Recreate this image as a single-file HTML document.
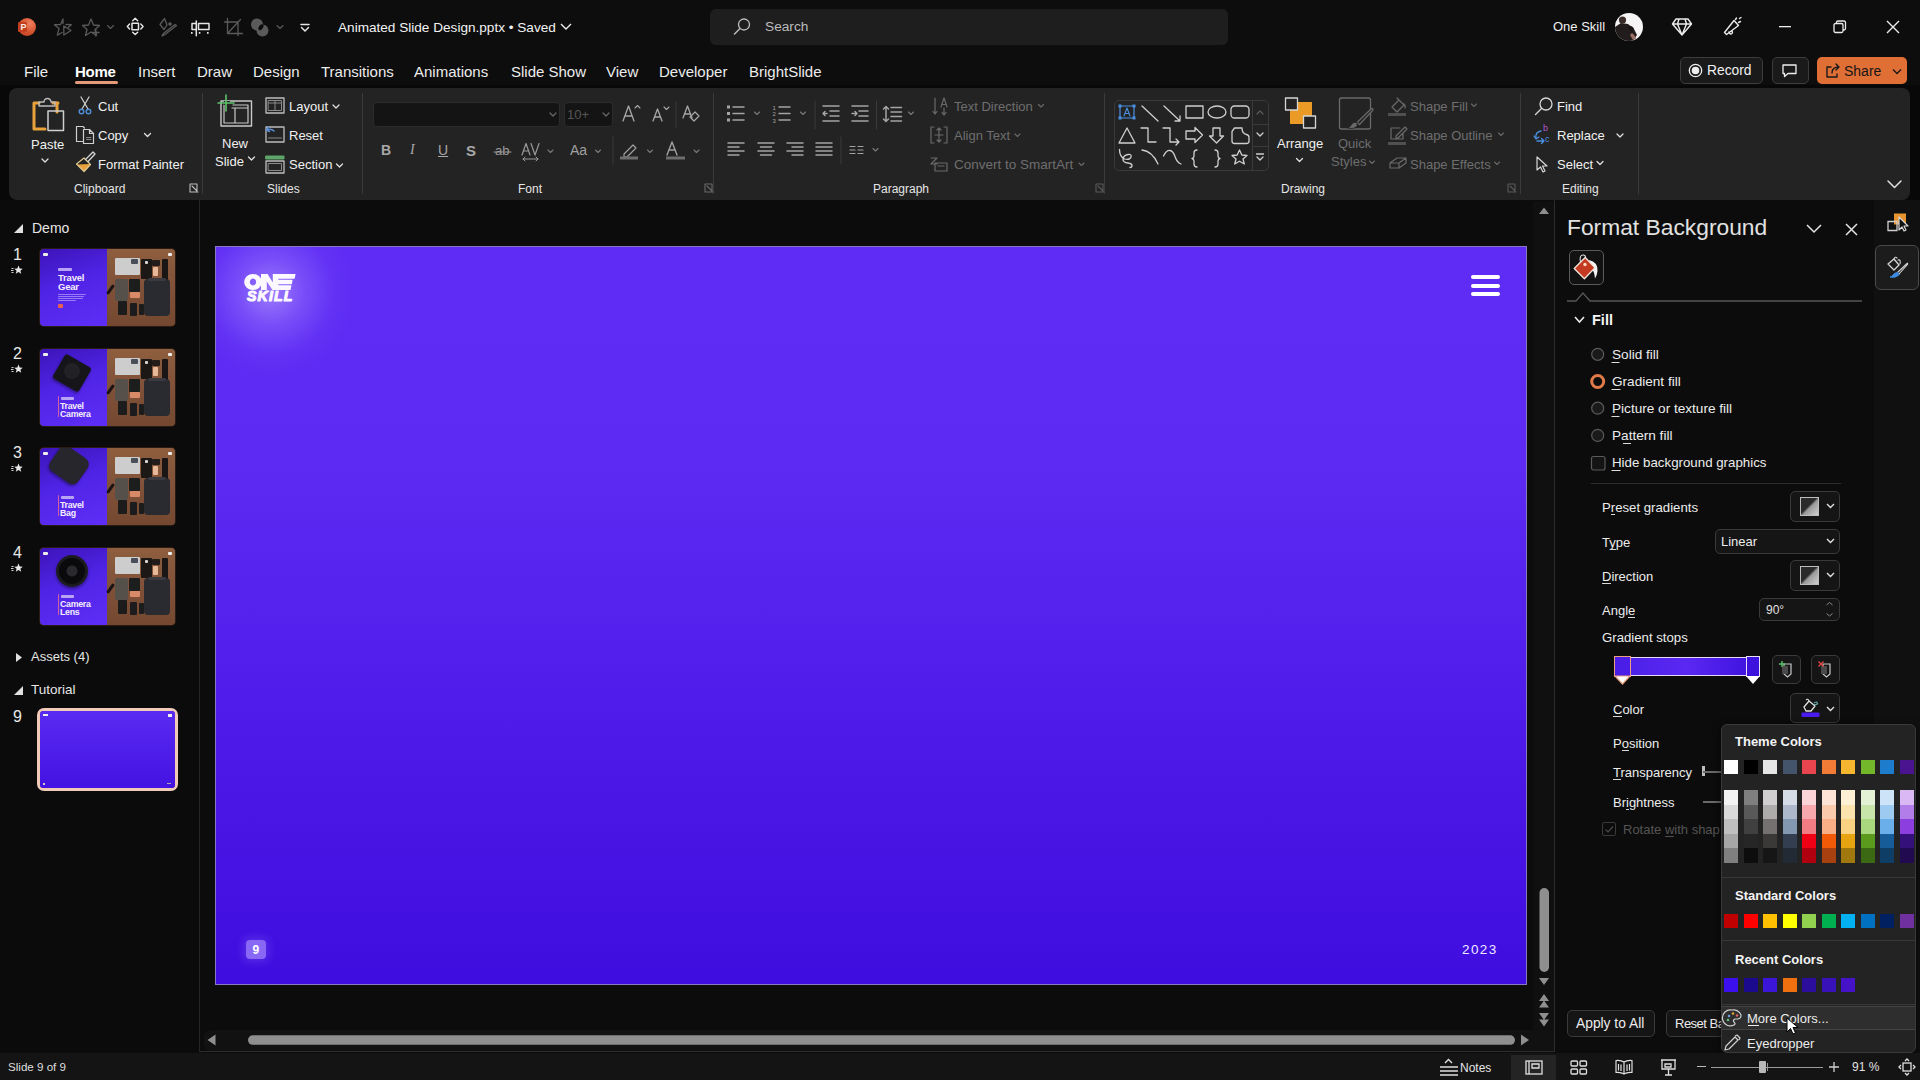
<!DOCTYPE html>
<html><head><meta charset="utf-8">
<style>
*{box-sizing:border-box;margin:0;padding:0}
html,body{width:1920px;height:1080px;overflow:hidden;background:#0d0d0d;font-family:"Liberation Sans",sans-serif;color:#e8e8e8}
.a{position:absolute}
.t{position:absolute;white-space:nowrap;line-height:1}
svg{position:absolute;overflow:visible}
.rb{font-size:13px;color:#f0f0f0}
.dis{color:#6e6e6e}
.gl{font-size:12px;color:#e6e6e6}
.pn{font-size:13.5px;color:#ececec}
</style></head><body>
<!-- ============ TITLE BAR ============ -->
<!-- PPT logo -->
<div class="a" style="left:18px;top:18px;width:18px;height:18px;border-radius:50%;background:radial-gradient(circle at 65% 30%,#f08060 0%,#d45430 50%,#b83c1e 100%)"></div>
<div class="a" style="left:18px;top:22px;width:9px;height:10px;border-radius:1px;background:#c2401e"></div>
<div class="t" style="left:20.5px;top:23px;font-size:9px;font-weight:bold;color:#fbe8e0">P</div>
<!-- quick access icons -->
<svg style="left:0;top:0" width="330" height="55" fill="none" stroke-linejoin="round" stroke-linecap="round">
 <!-- star play (grey) -->
 <path d="M63 23.5 L63 19 L60.5 24.5 L54.5 24.7 L59 28.6 L57.3 35.2 L62 32.5 M66 24.5 L71.3 24.7 L68.5 27.2" stroke="#5a5a5a" stroke-width="1.3"/>
 <path d="M63.8 26 L71 30.5 L63.8 35 Z" stroke="#5a5a5a" stroke-width="1.3"/>
 <!-- star plus (grey) -->
 <path d="M91 19 L93.5 25 L99.5 25.5 L95 29.5 L96.5 35.5 L91 32 L85.5 35.5 L87 29.5 L82.5 25.5 L88.5 25 Z" stroke="#5a5a5a" stroke-width="1.3"/>
 <path d="M95.8 29.5 v6.5 M92.5 32.5 h6.5" stroke="#5a5a5a" stroke-width="1.3"/>
 <path d="M107.5 25.5 l3 3 l3 -3" stroke="#5a5a5a" stroke-width="1.1"/>
 <!-- move arrows (white) -->
 <rect x="132" y="23.2" width="6.5" height="6.5" stroke="#e6e6e6" stroke-width="1.5"/>
 <path d="M132.7 20.7 L135.2 18.3 L137.7 20.7 M132.7 32.2 L135.2 34.6 L137.7 32.2 M129.6 24 L127.3 26.5 L129.6 29 M140.8 24 L143.1 26.5 L140.8 29" stroke="#e6e6e6" stroke-width="1.4"/>
 <!-- brush grey -->
 <path d="M164.5 18.5 l-4.5 6 l4 5 l3 -4.5 z" stroke="#5a5a5a" stroke-width="1.3"/>
 <circle cx="170" cy="24" r="1.8" fill="#5a5a5a"/>
 <path d="M176.5 25.5 L165 34.5 q-2 1 -3 1.5 q1 -2 2 -3 L175 24.5 z" stroke="#5a5a5a" stroke-width="1.3"/>
 <!-- align (white) -->
 <path d="M196.3 21 v14.8 M196 23.5 h-4 v6 h4 M198.5 23.5 h10.5 v6 h-10.5 z" stroke="#e6e6e6" stroke-width="1.5"/>
 <g fill="#e6e6e6"><rect x="191" y="32" width="1.6" height="1.8"/><rect x="198.8" y="32" width="1.6" height="1.8"/><rect x="207" y="32" width="1.6" height="1.8"/></g>
 <!-- crop grey -->
 <path d="M227.5 18.5 v15 h15 M224.5 22 h13.5 v13.5 M228 33 L240.5 19.5" stroke="#5a5a5a" stroke-width="1.3"/>
 <!-- merge shapes grey -->
 <circle cx="257" cy="24.5" r="6" fill="#5a5a5a"/><circle cx="262.5" cy="30.5" r="6" fill="#5a5a5a"/>
 <ellipse cx="261" cy="27.2" rx="2" ry="3.3" transform="rotate(35 261 27.2)" fill="#0a0a0a"/>
 <path d="M277 25.5 l3 3 l3 -3" stroke="#5a5a5a" stroke-width="1.1"/>
 <!-- customize -->
 <path d="M301 24.5 h8" stroke="#e6e6e6" stroke-width="1.5"/>
 <path d="M301.5 27.5 l3.5 3.5 l3.5 -3.5" stroke="#e6e6e6" stroke-width="1.5"/>
</svg>
<div class="t" style="left:338px;top:21px;font-size:13.6px;color:#f2f2f2">Animated Slide Design.pptx • Saved</div>
<svg style="left:560px;top:22px" width="12" height="10" fill="none"><path d="M1 2 l5 5 l5 -5" stroke="#eee" stroke-width="1.4"/></svg>
<!-- search -->
<div class="a" style="left:710px;top:9px;width:518px;height:36px;border-radius:6px;background:#1e1e1e"></div>
<svg style="left:733px;top:18px" width="18" height="18" fill="none"><circle cx="11" cy="6.5" r="5.5" stroke="#bdbdbd" stroke-width="1.3"/><path d="M7 10.5 L1 16.5" stroke="#bdbdbd" stroke-width="1.4"/></svg>
<div class="t" style="left:765px;top:20px;font-size:13.7px;color:#bcbcbc">Search</div>
<!-- right side -->
<div class="t" style="left:1553px;top:20px;font-size:13px;color:#f0f0f0">One Skill</div>
<svg style="left:1615px;top:13px" width="28" height="28">
 <defs><clipPath id="avc"><circle cx="14" cy="14" r="14"/></clipPath></defs>
 <g clip-path="url(#avc)">
  <rect width="28" height="28" fill="#f6f4f4"/>
  <path d="M0 14 L6 10 L13 11 L19 16 L22 22 L18 28 L0 28 Z" fill="#231c1c"/>
  <circle cx="7.5" cy="7" r="3.6" fill="#3a2c28"/>
  <path d="M13 13 q4 -1 6 3 l-2 3 q-3 -2 -4 -6z" fill="#1a1414"/>
  <path d="M17 20 q3 2 4 6 l-3 1 q-2 -3 -3 -5z" fill="#9a7066"/>
 </g>
</svg>
<svg style="left:1672px;top:18px" width="20" height="18" fill="none" stroke="#ececec" stroke-width="1.4" stroke-linejoin="round"><path d="M4 1 h12 l3.5 5 L10 17 L0.5 6 Z M0.5 6 h19 M7 1 L5.5 6 L10 17 L14.5 6 L13 1"/></svg>
<svg style="left:1723px;top:17px" width="22" height="20" fill="none" stroke="#ececec" stroke-width="1.4" stroke-linejoin="round" stroke-linecap="round"><path d="M1.5 15.5 L11 3.5 L15.5 8.5 L3.5 17.5 Z M6 15 q1 3 3 1.5 q1 -1 0 -2.5 M12.5 2.5 l1 -1.5 M15.5 5.5 l2 -1 M16.5 1.5 l1.5 -1"/></svg>
<svg style="left:1779px;top:26px" width="14" height="2"><rect width="12" height="1.3" fill="#ececec"/></svg>
<svg style="left:1833px;top:20px" width="14" height="14" fill="none" stroke="#ececec" stroke-width="1.3"><rect x="1" y="3.5" width="9" height="9" rx="1.5"/><path d="M3.5 3.5 V2.5 a1.5 1.5 0 0 1 1.5 -1.5 h6 a1.5 1.5 0 0 1 1.5 1.5 v6 a1.5 1.5 0 0 1 -1.5 1.5 h-1"/></svg>
<svg style="left:1886px;top:20px" width="14" height="14" fill="none" stroke="#ececec" stroke-width="1.4"><path d="M1 1 L13 13 M13 1 L1 13"/></svg>

<!-- ============ TABS ============ -->
<div class="t" style="left:24px;top:64px;font-size:15px;color:#ececec">File</div>
<div class="t" style="left:75px;top:64px;font-size:15px;color:#fff;font-weight:bold;letter-spacing:-0.3px">Home</div>
<div class="a" style="left:75px;top:81px;width:43px;height:3px;border-radius:2px;background:#e39a78"></div>
<div class="t" style="left:138px;top:64px;font-size:15px;color:#ececec">Insert</div>
<div class="t" style="left:197px;top:64px;font-size:15px;color:#ececec">Draw</div>
<div class="t" style="left:253px;top:64px;font-size:15px;color:#ececec">Design</div>
<div class="t" style="left:321px;top:64px;font-size:15px;color:#ececec">Transitions</div>
<div class="t" style="left:414px;top:64px;font-size:15px;color:#ececec">Animations</div>
<div class="t" style="left:511px;top:64px;font-size:15px;color:#ececec">Slide Show</div>
<div class="t" style="left:606px;top:64px;font-size:15px;color:#ececec">View</div>
<div class="t" style="left:659px;top:64px;font-size:15px;color:#ececec">Developer</div>
<div class="t" style="left:749px;top:64px;font-size:15px;color:#ececec">BrightSlide</div>
<!-- record / comment / share -->
<div class="a" style="left:1680px;top:57px;width:83px;height:27px;border-radius:5px;background:#1a1a1a;border:1px solid #3c3c3c"></div>
<svg style="left:1688px;top:63px" width="15" height="15" fill="none"><circle cx="7.5" cy="7.5" r="6.2" stroke="#eee" stroke-width="1.3"/><circle cx="7.5" cy="7.5" r="3.8" fill="#eee"/></svg>
<div class="t" style="left:1707px;top:64px;font-size:13.8px;color:#f0f0f0">Record</div>
<div class="a" style="left:1772px;top:57px;width:37px;height:27px;border-radius:5px;background:#1a1a1a;border:1px solid #3c3c3c"></div>
<svg style="left:1782px;top:64px" width="16" height="14" fill="none" stroke="#eee" stroke-width="1.3" stroke-linejoin="round"><path d="M1 1 h13 v8.5 h-8 l-3.5 3 v-3 h-1.5 Z"/></svg>
<div class="a" style="left:1817px;top:57px;width:90px;height:27px;border-radius:5px;background:#e06f36"></div>
<svg style="left:1825px;top:63px" width="16" height="15" fill="none" stroke="#1a1a1a" stroke-width="1.4" stroke-linejoin="round" stroke-linecap="round"><path d="M6 4 H2 v10 h10 v-3 M7 10 c0 -4 3 -6 7 -6 M11 1 l3 3 l-3 3"/></svg>
<div class="t" style="left:1844px;top:64px;font-size:14px;color:#151515">Share</div>
<svg style="left:1892px;top:68px" width="10" height="8" fill="none"><path d="M1 1.5 l4 4 l4 -4" stroke="#1a1a1a" stroke-width="1.4"/></svg>
<!-- ============ RIBBON ============ -->
<div class="a" style="left:0;top:85px;width:1920px;height:118px;background:#080808"></div>
<div class="a" style="left:9px;top:88px;width:1901px;height:112px;border-radius:8px;background:#232323"></div>
<!-- separators -->
<div class="a" style="left:202px;top:93px;width:1px;height:101px;background:#3a3a3a"></div>
<div class="a" style="left:362px;top:93px;width:1px;height:101px;background:#3a3a3a"></div>
<div class="a" style="left:713px;top:93px;width:1px;height:101px;background:#3a3a3a"></div>
<div class="a" style="left:1104px;top:93px;width:1px;height:101px;background:#3a3a3a"></div>
<div class="a" style="left:1520px;top:93px;width:1px;height:101px;background:#3a3a3a"></div>
<div class="a" style="left:1638px;top:93px;width:1px;height:101px;background:#3a3a3a"></div>

<!-- Clipboard -->
<svg style="left:0;top:0" width="200" height="200" fill="none" stroke-linejoin="round" stroke-linecap="round">
 <!-- paste clipboard -->
 <path d="M34 103 h5 M53 103 h5 M34 103 v26 h11" stroke="#e9a23b" stroke-width="3"/>
 <path d="M57 103 v9" stroke="#e9a23b" stroke-width="3"/>
 <path d="M39 106 h16 v-4 h-4 a3.5 3.5 0 0 0 -7 0 h-5 z" stroke="#bdbdbd" stroke-width="1.4"/>
 <rect x="48" y="111" width="15.5" height="19.5" stroke="#cfcfcf" stroke-width="1.5"/>
 <path d="M42 159 l3 3 l3 -3" stroke="#e0e0e0" stroke-width="1.3"/>
 <!-- scissors -->
 <path d="M81 97 L88 109 M89 97 L82 109" stroke="#d6d6d6" stroke-width="1.2"/>
 <circle cx="81.5" cy="111.5" r="2.3" stroke="#4f8fd6" stroke-width="1.4"/><circle cx="88.5" cy="111.5" r="2.3" stroke="#4f8fd6" stroke-width="1.4"/>
 <!-- copy -->
 <path d="M82.5 141.5 h-6 v-15 h6.5 l1.5 1.5" stroke="#cfcfcf" stroke-width="1.2"/>
 <path d="M83.5 129.5 h6 l4 4 v10 h-10 z M89.5 129.5 v4 h4" stroke="#cfcfcf" stroke-width="1.2"/>
 <path d="M86.5 137.5 h4.5 M86.5 139.5 h4.5" stroke="#8a8a8a" stroke-width="1"/>
 <path d="M144.5 133.5 l3 3 l3 -3" stroke="#e0e0e0" stroke-width="1.3"/>
 <!-- format painter -->
 <path d="M77 164.5 L91 164 L84.5 171.5 Z" fill="#e9a23b"/>
 <path d="M76.5 164 L84 158 L90.5 164.5 L84 171.5 Z" stroke="#e2c890" stroke-width="1.2"/>
 <path d="M85.5 159.5 L93 152 L95 154 L88 161.5" stroke="#d6d6d6" stroke-width="1.3"/>
 <path d="M190 184 h7 v7 M190 184 v8 h8 M192 186 l5 5" stroke="#bdbdbd" stroke-width="1.1"/>
</svg>
<div class="t rb" style="left:31px;top:138px">Paste</div>
<div class="t rb" style="left:98px;top:100px">Cut</div>
<div class="t rb" style="left:98px;top:129px">Copy</div>
<div class="t rb" style="left:98px;top:158px">Format Painter</div>
<div class="t gl" style="left:74px;top:183px">Clipboard</div>

<!-- Slides -->
<svg style="left:0;top:0" width="370" height="200" fill="none" stroke-linejoin="round" stroke-linecap="round">
 <rect x="221" y="101" width="30.5" height="25" stroke="#c9c9c9" stroke-width="1.4"/>
 <path d="M224 105 v18 h24 v-18 h-15 M232 108 h16 M235 108 v15" stroke="#c9c9c9" stroke-width="1.2"/>
 <rect x="224" y="101" width="6" height="4" fill="#232323" stroke="none"/>
 <path d="M226 95 v16 M218 103 h16" stroke="#5ec46a" stroke-width="1.6"/>
 <path d="M248.5 157 l3 3 l3 -3" stroke="#e0e0e0" stroke-width="1.3"/>
 <!-- layout -->
 <rect x="266" y="98" width="18" height="15" stroke="#bdbdbd" stroke-width="1.3"/>
 <rect x="268.5" y="100.5" width="13" height="10" stroke="#8a8a8a" stroke-width="1"/>
 <path d="M275 100.5 v10 M268.5 103 h13" stroke="#8a8a8a" stroke-width="1"/>
 <path d="M333 105 l3 3 l3 -3" stroke="#e0e0e0" stroke-width="1.3"/>
 <!-- reset -->
 <rect x="266" y="127" width="18" height="15" stroke="#bdbdbd" stroke-width="1.3"/>
 <path d="M268.5 138 h13" stroke="#8a8a8a" stroke-width="1"/>
 <path d="M274 131 q-3 -3 -7 -1 M266.5 130 l2 -3 M266.5 130 l3 1.5" stroke="#5a8fd6" stroke-width="1.5"/>
 <!-- section -->
 <rect x="266" y="156" width="18" height="3" fill="#5fa56a" stroke="#5fa56a" stroke-width="1"/>
 <rect x="266" y="161" width="18" height="12" stroke="#bdbdbd" stroke-width="1.3"/>
 <rect x="268.5" y="163.5" width="13" height="7" stroke="#8a8a8a" stroke-width="1"/>
 <path d="M336.5 164 l3 3 l3 -3" stroke="#e0e0e0" stroke-width="1.3"/>
</svg>
<div class="t rb" style="left:222px;top:137px">New</div>
<div class="t rb" style="left:215px;top:155px">Slide</div>
<div class="t rb" style="left:289px;top:100px">Layout</div>
<div class="t rb" style="left:289px;top:129px">Reset</div>
<div class="t rb" style="left:289px;top:158px">Section</div>
<div class="t gl" style="left:267px;top:183px">Slides</div>

<!-- Font -->
<div class="a" style="left:373px;top:102px;width:187px;height:25px;border-radius:4px;background:#141414;border:1px solid #2c2c2c"></div>
<div class="a" style="left:564px;top:102px;width:49px;height:25px;border-radius:4px;background:#141414;border:1px solid #2c2c2c"></div>
<div class="t" style="left:567px;top:108px;font-size:13px;color:#555">10+</div>
<svg style="left:0;top:0" width="720" height="200" fill="none" stroke-linejoin="round" stroke-linecap="round">
 <path d="M550 113 l3 3 l3 -3 M603 113 l3 3 l3 -3" stroke="#6a6a6a" stroke-width="1.2"/>
 <!-- grow/shrink -->
 <path d="M623 121 L628.5 106 L634 121 M625 116 h7" stroke="#a8a8a8" stroke-width="1.3"/>
 <path d="M635 108 l2.5 -2.5 l2.5 2.5" stroke="#a8a8a8" stroke-width="1.1"/>
 <path d="M653 121 L657.5 109 L662 121 M654.5 117 h6" stroke="#a8a8a8" stroke-width="1.3"/>
 <path d="M664 107 l2.5 2.5 l2.5 -2.5" stroke="#a8a8a8" stroke-width="1.1"/>
 <path d="M676 102 v26" stroke="#3a3a3a" stroke-width="1"/>
 <path d="M683 118 L687.5 106 L692 118 M684.5 114 h5" stroke="#a8a8a8" stroke-width="1.3"/>
 <path d="M690 117 l5 -5 l4 4 l-5 5 z" stroke="#a8a8a8" stroke-width="1.2"/>
 <path d="M613 137 v27" stroke="#3a3a3a" stroke-width="1"/>
 <!-- strike ab -->
 <path d="M494 152 h17" stroke="#9a9a9a" stroke-width="1.1"/>
 <!-- AV -->
 <path d="M522 155 L526 143.5 L530 155 M523.5 151 h5 M531 143.5 L535 155 L539 143.5" stroke="#9a9a9a" stroke-width="1.2"/>
 <path d="M523 159 h15 M525 157 l-2 2 l2 2 M536 157 l2 2 l-2 2" stroke="#9a9a9a" stroke-width="1"/>
 <path d="M548 150 l2.5 2.5 l2.5 -2.5 M595.5 150 l2.5 2.5 l2.5 -2.5 M647.5 150 l2.5 2.5 l2.5 -2.5 M694 150 l2.5 2.5 l2.5 -2.5" stroke="#7a7a7a" stroke-width="1.1"/>
 <!-- highlighter -->
 <path d="M624 154 l9 -9 l3 3 l-9 9 h-3 z" stroke="#a0a0a0" stroke-width="1.2"/>
 <rect x="620" y="156.5" width="18" height="3" fill="#6e6e6e"/>
 <!-- font color -->
 <path d="M667 155 L672 142 L677 155 M669 150 h6" stroke="#a0a0a0" stroke-width="1.4"/>
 <rect x="666" y="156.5" width="19" height="3" fill="#6e6e6e"/>
 <path d="M705 184 h7 v7 M705 184 v8 h8 M707 186 l5 5" stroke="#6a6a6a" stroke-width="1.1"/>
</svg>
<div class="t" style="left:381px;top:143px;font-size:14px;font-weight:bold;color:#a8a8a8">B</div>
<div class="t" style="left:410px;top:143px;font-size:14px;font-style:italic;font-family:'Liberation Serif',serif;color:#a8a8a8">I</div>
<div class="t" style="left:438px;top:143px;font-size:14px;color:#a8a8a8;text-decoration:underline">U</div>
<div class="t" style="left:466px;top:143px;font-size:15px;font-weight:bold;color:#a8a8a8">S</div>
<div class="t" style="left:495px;top:144px;font-size:13px;color:#9a9a9a">ab</div>
<div class="t" style="left:570px;top:143px;font-size:14px;color:#a0a0a0">Aa</div>
<div class="t gl" style="left:518px;top:183px">Font</div>
<!-- Paragraph -->
<svg style="left:0;top:0" width="1110" height="200" fill="none" stroke-linejoin="round" stroke-linecap="round">
 <g stroke="#a4a4a4" stroke-width="1.5">
  <!-- bullets -->
  <path d="M733 107 h11 M733 113.5 h11 M733 120 h11"/>
  <!-- numbering -->
  <path d="M779 107 h11 M779 113.5 h11 M779 120 h11"/>
  <!-- decrease indent -->
  <path d="M823 106 h16 M830 111 h9 M830 116 h9 M823 121 h16 M827 113.5 h-4 M825 111.5 l-2 2 l2 2"/>
  <!-- increase indent -->
  <path d="M852 106 h16 M859 111 h9 M859 116 h9 M852 121 h16 M852 113.5 h5 M855 111.5 l2 2 l-2 2"/>
  <!-- line spacing -->
  <path d="M891 107.5 h10.5 M891 112 h10.5 M891 116.5 h10.5 M891 121 h10.5 M886 107 v14 M883.5 109 l2.5 -2.5 l2.5 2.5 M883.5 119 l2.5 2.5 l2.5 -2.5"/>
  <!-- align rows -->
  <path d="M728 143 h16 M728 147 h11 M728 151 h16 M728 155 h11"/>
  <path d="M758 143 h16 M760.5 147 h11 M758 151 h16 M760.5 155 h11"/>
  <path d="M787 143 h16 M792 147 h11 M787 151 h16 M792 155 h11"/>
  <path d="M816 143 h16 M816 147 h16 M816 151 h16 M816 155 h16"/>
  <!-- columns -->
  <path d="M850 146.5 h5 M858 146.5 h5 M850 150 h5 M858 150 h5 M850 153.5 h5 M858 153.5 h5" stroke-width="1.2"/>
 </g>
 <g fill="#a4a4a4"><rect x="727" y="105.5" width="3" height="3"/><rect x="727" y="112" width="3" height="3"/><rect x="727" y="118.5" width="3" height="3"/></g>
 <g fill="#a4a4a4" font-size="6" font-family="Liberation Sans"><text x="772.5" y="109.5">1</text><text x="772.5" y="116">2</text><text x="772.5" y="122.5">3</text></g>
 <path d="M754.5 112 l2.5 2.5 l2.5 -2.5 M800.5 112 l2.5 2.5 l2.5 -2.5 M908.5 112 l2.5 2.5 l2.5 -2.5 M873 148.5 l2.5 2.5 l2.5 -2.5" stroke="#7a7a7a" stroke-width="1.1"/>
 <path d="M815 101 v28 M876.5 101 v28 M841 137 v27" stroke="#3a3a3a" stroke-width="1"/>
 <!-- text direction (disabled) -->
 <g stroke="#6a6a6a" stroke-width="1.2">
  <path d="M935 98 v16 M933 111.5 l2 2.5 l2 -2.5 M941 107 L944 98 L947 107 M942 104.5 h4 M944 108 v7 M942 112.5 l2 2.5 l2 -2.5"/>
  <path d="M934 127 h-3 v16 h3 M944 127 h3 v16 h-3 M939 128 v14 M937 130 l2 -2 l2 2 M937 140 l2 2 l2 -2 M935 135 h8"/>
  <path d="M931 158 h6 l-6 6 h6 M935 163 h12 v8 h-12 z M938 166 h6"/>
 </g>
 <path d="M1038.5 104.5 l2.5 2.5 l2.5 -2.5 M1015 134 l2.5 2.5 l2.5 -2.5 M1079 163 l2.5 2.5 l2.5 -2.5" stroke="#6a6a6a" stroke-width="1.1"/>
 <path d="M1096 184 h7 v7 M1096 184 v8 h8 M1098 186 l5 5" stroke="#5a5a5a" stroke-width="1.1"/>
</svg>
<div class="t" style="left:773px;top:104px;font-size:5px;color:#a4a4a4"></div>
<div class="t rb dis" style="left:954px;top:100px">Text Direction</div>
<div class="t rb dis" style="left:954px;top:129px">Align Text</div>
<div class="t rb dis" style="left:954px;top:158px;font-size:13.5px">Convert to SmartArt</div>
<div class="t gl" style="left:873px;top:183px">Paragraph</div>

<!-- Drawing -->
<div class="a" style="left:1114px;top:100px;width:155px;height:71px;border-radius:5px;border:1px solid #3a3a3a"></div>
<div class="a" style="left:1252px;top:100px;width:1px;height:71px;background:#3a3a3a"></div>
<div class="a" style="left:1252px;top:124px;width:17px;height:1px;background:#3a3a3a"></div>
<div class="a" style="left:1252px;top:146px;width:17px;height:1px;background:#3a3a3a"></div>
<svg style="left:0;top:0" width="1530" height="200" fill="none" stroke-linejoin="round" stroke-linecap="round">
 <!-- row 1 -->
 <rect x="1120" y="106" width="14" height="12" stroke="#4a90e2" stroke-width="1.2"/>
 <g fill="#4a90e2"><rect x="1118.5" y="104.5" width="3" height="3"/><rect x="1132.5" y="104.5" width="3" height="3"/><rect x="1118.5" y="116.5" width="3" height="3"/><rect x="1132.5" y="116.5" width="3" height="3"/></g>
 <path d="M1124 116 L1127 108 L1130 116 M1125 113.5 h4" stroke="#4a90e2" stroke-width="1.1"/>
 <g stroke="#cfcfcf" stroke-width="1.3">
  <path d="M1142 106 L1158 121"/>
  <path d="M1164 106 L1180 121 M1180 116 v5 h-5"/>
  <rect x="1186" y="106" width="17" height="12"/>
  <ellipse cx="1217" cy="112" rx="9" ry="6"/>
  <rect x="1231" y="106" width="18" height="12" rx="3.5"/>
  <!-- row 2 -->
  <path d="M1119 143 L1127 128 L1135 143 Z"/>
  <path d="M1141 128 h7 v14 h8"/>
  <path d="M1163 128 h7 v14 h9 M1176 139 l3 3 l-3 3"/>
  <path d="M1186 131 h9 v-3.5 l7.5 7.5 l-7.5 7.5 v-3.5 h-9 z"/>
  <path d="M1213 128 h7 v8 h3.5 l-7 7 l-7 -7 h3.5 z"/>
  <path d="M1234.5 128 h7.5 q0 5.5 4.5 6.5 q2.5 .5 2.5 3 v3.5 q0 2.5 -2.5 2.5 h-12 q-2.5 0 -2.5 -2.5 v-9.5 z"/>
  <!-- row 3 -->
  <path d="M1119.5 149.5 q0 7 5 9.5 q5 1.5 6.5 -2 q1 -3 -3 -2.5 q-5 1 -5 5 q0 3 5 3.5 q4 .5 4 2.5 q0 2 -2 2"/>
  <path d="M1142 150 q10 1 16 14"/>
  <path d="M1163.5 156 q3 -6 6.5 -5.5 q3 .5 5 6 q2 6 6 7.5"/>
  <path d="M1197 150 q-3 0 -3 3 v3 q0 2 -2 2.5 q2 .5 2 2.5 v3 q0 3 3 3"/>
  <path d="M1215 150 q3 0 3 3 v3 q0 2 2 2.5 q-2 .5 -2 2.5 v3 q0 3 -3 3"/>
  <path d="M1239.5 150 l2.3 5 l5.2 .5 l-4 3.5 l1.3 5 l-4.8 -2.8 l-4.8 2.8 l1.3 -5 l-4 -3.5 l5.2 -.5 z"/>
 </g>
 <path d="M1257 114 l3 -3 l3 3" stroke="#5a5a5a" stroke-width="1.2"/>
 <path d="M1257 133 l3 3 l3 -3" stroke="#cfcfcf" stroke-width="1.3"/>
 <path d="M1256.5 154 h7 M1257 157 l3 3 l3 -3" stroke="#cfcfcf" stroke-width="1.3"/>
 <!-- arrange -->
 <rect x="1290" y="102" width="22" height="22" fill="#ec9a26"/>
 <rect x="1285.5" y="98" width="12" height="12" fill="#232323" stroke="#d6d6d6" stroke-width="1.3"/>
 <rect x="1303.5" y="116" width="12" height="12" fill="#232323" stroke="#d6d6d6" stroke-width="1.3"/>
 <path d="M1296.5 158.5 l3 3 l3 -3" stroke="#e0e0e0" stroke-width="1.3"/>
 <!-- quick styles -->
 <rect x="1339.5" y="98" width="31" height="31" rx="2" stroke="#6a6a6a" stroke-width="1.3"/>
 <path d="M1371 109 q2 -1.5 2 1 L1359.5 124.5 l-2.5 -2 Z" stroke="#6a6a6a" stroke-width="1.2" fill="#232323"/>
 <path d="M1357 122.5 q-3.5 -1 -5.5 2 q-1 2.5 -4 3.5 q6 1.5 9 -1.5 q1.5 -1.5 .5 -2 z" fill="#6a6a6a" stroke="#232323" stroke-width=".8"/>
 <path d="M1369.5 161 l2.5 2.5 l2.5 -2.5" stroke="#6a6a6a" stroke-width="1.1"/>
 <!-- shape fill/outline/effects -->
 <g stroke="#6a6a6a" stroke-width="1.2">
  <path d="M1392 107 l7 -7 l5 5 l-7 7 z M1399 100 l-2 -2 M1404 104 q2 2 1 4"/>
  <path d="M1391 128 h9 M1391 128 v11 h12 v-5 M1396 136 l9 -9 l2 2 l-9 9 h-2 z"/>
  <path d="M1390 163 l7 -5 h9 l-7 5 z M1390 163 v5 h9 v-5 M1399 168 l7 -5 v-5"/>
 </g>
 <rect x="1388" y="113" width="18" height="3" fill="#505050"/>
 <rect x="1388" y="142" width="18" height="3" fill="#505050"/>
 <path d="M1471.5 104 l2.5 2.5 l2.5 -2.5 M1498.5 133 l2.5 2.5 l2.5 -2.5 M1494.5 162 l2.5 2.5 l2.5 -2.5" stroke="#6a6a6a" stroke-width="1.1"/>
 <path d="M1508 184 h7 v7 M1508 184 v8 h8 M1510 186 l5 5" stroke="#5a5a5a" stroke-width="1.1"/>
</svg>
<div class="t rb" style="left:1277px;top:137px">Arrange</div>
<div class="t rb dis" style="left:1338px;top:137px">Quick</div>
<div class="t rb dis" style="left:1331px;top:155px">Styles</div>
<div class="t rb dis" style="left:1410px;top:100px">Shape Fill</div>
<div class="t rb dis" style="left:1410px;top:129px">Shape Outline</div>
<div class="t rb dis" style="left:1410px;top:158px">Shape Effects</div>
<div class="t gl" style="left:1281px;top:183px">Drawing</div>

<!-- Editing -->
<svg style="left:0;top:0" width="1920" height="200" fill="none" stroke-linejoin="round" stroke-linecap="round">
 <circle cx="1546" cy="104" r="6" stroke="#d6d6d6" stroke-width="1.3"/>
 <path d="M1541.5 108.5 L1535.5 114.5" stroke="#d6d6d6" stroke-width="1.4"/>
 <path d="M1541 131 q-6 1 -5 7 M1534 136 l2 3 l3 -2 M1537 141 h7 M1541.5 138.5 l2.5 2.5 l-2.5 2.5" stroke="#4a90e2" stroke-width="1.3"/>
 <path d="M1617 134 l3 3 l3 -3 M1597 161.5 l3 3 l3 -3" stroke="#e0e0e0" stroke-width="1.3"/>
 <path d="M1537 157 v13 l3.5 -3 l2.5 5 l2 -1 l-2.5 -5 h4.5 z" stroke="#d6d6d6" stroke-width="1.2"/>
 <path d="M1888 181 l6.5 6.5 l6.5 -6.5" stroke="#e0e0e0" stroke-width="1.5"/>
</svg>
<div class="t" style="left:1543px;top:124px;font-size:9px;color:#b05ac8">b</div>
<div class="t" style="left:1545px;top:135px;font-size:9px;color:#4a90e2">c</div>
<div class="t rb" style="left:1557px;top:100px">Find</div>
<div class="t rb" style="left:1557px;top:129px">Replace</div>
<div class="t rb" style="left:1557px;top:158px">Select</div>
<div class="t gl" style="left:1562px;top:183px">Editing</div>
<!-- ============ LEFT PANEL ============ -->
<div class="a" style="left:0;top:200px;width:200px;height:852px;background:#0b0b0b"></div>
<div class="a" style="left:199px;top:200px;width:1px;height:852px;background:#262626"></div>
<style>
.th{position:absolute;left:40px;width:135px;height:77px;border-radius:4px;overflow:hidden;background:#6e4128;box-shadow:0 0 0 1px #2a1c14}
.th .pl{position:absolute;left:0;top:0;width:67px;height:77px;background:linear-gradient(160deg,#3c14b8 0%,#5024e6 45%,#5e2ef6 100%)}
.th .wd{position:absolute;left:67px;top:0;width:68px;height:77px;background:linear-gradient(180deg,#8e5e3e 0%,#82523a 45%,#744830 100%)}
.th .ob{position:absolute;left:0;top:0;width:135px;height:77px;filter:blur(0.6px)}
.th .o{position:absolute;border-radius:1px}
.th .tt{position:absolute;font-weight:bold;color:#f4eefc;line-height:0.92;white-space:nowrap}
.sn{position:absolute;font-size:16px;color:#e8e8e8;line-height:1}
.st{position:absolute;left:11px;width:12px;height:10px}
</style>
<svg style="left:14px;top:224px" width="10" height="10"><path d="M9 0 V9 H0 Z" fill="#e0e0e0"/></svg>
<div class="t" style="left:32px;top:221px;font-size:14px;color:#e6e6e6">Demo</div>

<div class="sn" style="left:13px;top:247px">1</div>
<svg class="st" style="top:265px" viewBox="0 0 12 10"><path d="M7.5 0.5 l1.2 3 l3 .2 l-2.3 2 l.8 3 l-2.7 -1.7 l-2.7 1.7 l.8 -3 l-2.3 -2 l3 -.2 z" fill="#e8e8e8"/><path d="M0.5 3.5 h2 M0 5.5 h2.5 M0.5 7.5 h2" stroke="#e8e8e8" stroke-width=".9"/></svg>
<div class="th" style="top:249px">
 <div class="pl"></div><div class="wd"></div>
 <div class="ob">
 <div class="o" style="left:75px;top:9px;width:25px;height:17px;background:#cdcdce"></div>
 <div class="o" style="left:91px;top:10px;width:7px;height:5px;background:#4a4e58"></div>
 <div class="o" style="left:101px;top:10px;width:11px;height:20px;background:#1c1816"></div>
 <div class="o" style="left:105px;top:12px;width:3px;height:3px;background:#d8d8d8"></div>
 <div class="o" style="left:113px;top:18px;width:5px;height:9px;background:#e8b898"></div>
 <div class="o" style="left:112px;top:11px;width:8px;height:6px;background:#221c1a"></div>
 <div class="o" style="left:122px;top:10px;width:6px;height:22px;background:#1a1616"></div>
 <div class="o" style="left:69px;top:35px;width:3px;height:11px;background:#1a1414;transform:rotate(35deg)"></div>
 <div class="o" style="left:75px;top:30px;width:13px;height:22px;border-radius:2px;background:#55504a"></div>
 <div class="o" style="left:89px;top:30px;width:11px;height:13px;background:#1c1e1e"></div>
 <div class="o" style="left:90px;top:43px;width:10px;height:6px;background:#d88a68"></div>
 <div class="o" style="left:104px;top:30px;width:26px;height:37px;border-radius:4px;background:#2a2b30"></div>
 <div class="o" style="left:108px;top:29px;width:18px;height:3px;border-radius:2px;background:#3a3a40"></div>
 <div class="o" style="left:78px;top:52px;width:9px;height:14px;background:#1c1c1c"></div>
 <div class="o" style="left:90px;top:54px;width:7px;height:13px;background:#1c1c1e"></div>
 <div class="o" style="left:99px;top:55px;width:5px;height:11px;background:#1c1c1c"></div>
 </div>
 <div class="o" style="left:3px;top:4px;width:5px;height:2.5px;background:#eee"></div>
 <div class="o" style="left:128px;top:4px;width:4px;height:3px;background:#eee"></div>
 <div class="o" style="left:18px;top:19px;width:14px;height:3px;background:#b8a4f4"></div>
 <div class="tt" style="left:18px;top:25px;font-size:9.5px;letter-spacing:-.2px">Travel<br>Gear</div>
 <div class="o" style="left:18px;top:45px;width:28px;height:1px;background:rgba(220,210,255,.5)"></div>
 <div class="o" style="left:18px;top:47px;width:26px;height:1px;background:rgba(220,210,255,.5)"></div>
 <div class="o" style="left:18px;top:49px;width:25px;height:1px;background:rgba(220,210,255,.5)"></div>
 <div class="o" style="left:18px;top:51px;width:18px;height:1px;background:rgba(220,210,255,.5)"></div>
 <div class="o" style="left:18px;top:55px;width:5px;height:4px;background:#e86050"></div>
</div>
<div class="sn" style="left:13px;top:346px">2</div>
<svg class="st" style="top:364px" viewBox="0 0 12 10"><path d="M7.5 0.5 l1.2 3 l3 .2 l-2.3 2 l.8 3 l-2.7 -1.7 l-2.7 1.7 l.8 -3 l-2.3 -2 l3 -.2 z" fill="#e8e8e8"/><path d="M0.5 3.5 h2 M0 5.5 h2.5 M0.5 7.5 h2" stroke="#e8e8e8" stroke-width=".9"/></svg>
<div class="th" style="top:349px">
 <div class="pl"></div><div class="wd"></div>
 <div class="ob">
 <div class="o" style="left:75px;top:9px;width:25px;height:17px;background:#cdcdce"></div>
 <div class="o" style="left:91px;top:10px;width:7px;height:5px;background:#4a4e58"></div>
 <div class="o" style="left:101px;top:10px;width:11px;height:20px;background:#1c1816"></div>
 <div class="o" style="left:105px;top:12px;width:3px;height:3px;background:#d8d8d8"></div>
 <div class="o" style="left:113px;top:18px;width:5px;height:9px;background:#e8b898"></div>
 <div class="o" style="left:112px;top:11px;width:8px;height:6px;background:#221c1a"></div>
 <div class="o" style="left:122px;top:10px;width:6px;height:22px;background:#1a1616"></div>
 <div class="o" style="left:69px;top:35px;width:3px;height:11px;background:#1a1414;transform:rotate(35deg)"></div>
 <div class="o" style="left:75px;top:30px;width:13px;height:22px;border-radius:2px;background:#55504a"></div>
 <div class="o" style="left:89px;top:30px;width:11px;height:13px;background:#1c1e1e"></div>
 <div class="o" style="left:90px;top:43px;width:10px;height:6px;background:#d88a68"></div>
 <div class="o" style="left:104px;top:30px;width:26px;height:37px;border-radius:4px;background:#2a2b30"></div>
 <div class="o" style="left:108px;top:29px;width:18px;height:3px;border-radius:2px;background:#3a3a40"></div>
 <div class="o" style="left:78px;top:52px;width:9px;height:14px;background:#1c1c1c"></div>
 <div class="o" style="left:90px;top:54px;width:7px;height:13px;background:#1c1c1e"></div>
 <div class="o" style="left:99px;top:55px;width:5px;height:11px;background:#1c1c1c"></div>
 </div>
 <div class="o" style="left:3px;top:4px;width:5px;height:2.5px;background:#eee"></div>
 <div class="o" style="left:128px;top:4px;width:4px;height:3px;background:#eee"></div>
 <div class="o" style="left:17px;top:10px;width:30px;height:28px;border-radius:3px;background:#16161a;transform:rotate(30deg);box-shadow:0 2px 3px rgba(0,0,0,.4)"></div>
 <div class="o" style="left:24px;top:14px;width:16px;height:16px;border-radius:50%;background:#222226;transform:rotate(30deg)"></div>
 <div class="o" style="left:21px;top:48px;width:13px;height:3px;background:#b8a4f4"></div>
 <div class="o" style="left:18px;top:47px;width:1.2px;height:21px;background:#d060a0"></div>
 <div class="tt" style="left:20px;top:53px;font-size:8.8px;letter-spacing:-.3px">Travel<br>Camera</div>
</div>
<div class="sn" style="left:13px;top:445px">3</div>
<svg class="st" style="top:463px" viewBox="0 0 12 10"><path d="M7.5 0.5 l1.2 3 l3 .2 l-2.3 2 l.8 3 l-2.7 -1.7 l-2.7 1.7 l.8 -3 l-2.3 -2 l3 -.2 z" fill="#e8e8e8"/><path d="M0.5 3.5 h2 M0 5.5 h2.5 M0.5 7.5 h2" stroke="#e8e8e8" stroke-width=".9"/></svg>
<div class="th" style="top:448px">
 <div class="pl"></div><div class="wd"></div>
 <div class="ob">
 <div class="o" style="left:75px;top:9px;width:25px;height:17px;background:#cdcdce"></div>
 <div class="o" style="left:91px;top:10px;width:7px;height:5px;background:#4a4e58"></div>
 <div class="o" style="left:101px;top:10px;width:11px;height:20px;background:#1c1816"></div>
 <div class="o" style="left:105px;top:12px;width:3px;height:3px;background:#d8d8d8"></div>
 <div class="o" style="left:113px;top:18px;width:5px;height:9px;background:#e8b898"></div>
 <div class="o" style="left:112px;top:11px;width:8px;height:6px;background:#221c1a"></div>
 <div class="o" style="left:122px;top:10px;width:6px;height:22px;background:#1a1616"></div>
 <div class="o" style="left:69px;top:35px;width:3px;height:11px;background:#1a1414;transform:rotate(35deg)"></div>
 <div class="o" style="left:75px;top:30px;width:13px;height:22px;border-radius:2px;background:#55504a"></div>
 <div class="o" style="left:89px;top:30px;width:11px;height:13px;background:#1c1e1e"></div>
 <div class="o" style="left:90px;top:43px;width:10px;height:6px;background:#d88a68"></div>
 <div class="o" style="left:104px;top:30px;width:26px;height:37px;border-radius:4px;background:#2a2b30"></div>
 <div class="o" style="left:108px;top:29px;width:18px;height:3px;border-radius:2px;background:#3a3a40"></div>
 <div class="o" style="left:78px;top:52px;width:9px;height:14px;background:#1c1c1c"></div>
 <div class="o" style="left:90px;top:54px;width:7px;height:13px;background:#1c1c1e"></div>
 <div class="o" style="left:99px;top:55px;width:5px;height:11px;background:#1c1c1c"></div>
 </div>
 <div class="o" style="left:3px;top:4px;width:5px;height:2.5px;background:#eee"></div>
 <div class="o" style="left:128px;top:4px;width:4px;height:3px;background:#eee"></div>
 <div class="o" style="left:12px;top:2px;width:34px;height:30px;border-radius:7px;background:#26262c;transform:rotate(35deg);box-shadow:0 2px 3px rgba(0,0,0,.4)"></div>
 <div class="o" style="left:21px;top:48px;width:13px;height:3px;background:#b8a4f4"></div>
 <div class="o" style="left:18px;top:47px;width:1.2px;height:21px;background:#d060a0"></div>
 <div class="tt" style="left:20px;top:53px;font-size:8.8px;letter-spacing:-.3px">Travel<br>Bag</div>
</div>
<div class="sn" style="left:13px;top:545px">4</div>
<svg class="st" style="top:563px" viewBox="0 0 12 10"><path d="M7.5 0.5 l1.2 3 l3 .2 l-2.3 2 l.8 3 l-2.7 -1.7 l-2.7 1.7 l.8 -3 l-2.3 -2 l3 -.2 z" fill="#e8e8e8"/><path d="M0.5 3.5 h2 M0 5.5 h2.5 M0.5 7.5 h2" stroke="#e8e8e8" stroke-width=".9"/></svg>
<div class="th" style="top:548px">
 <div class="pl"></div><div class="wd"></div>
 <div class="ob">
 <div class="o" style="left:75px;top:9px;width:25px;height:17px;background:#cdcdce"></div>
 <div class="o" style="left:91px;top:10px;width:7px;height:5px;background:#4a4e58"></div>
 <div class="o" style="left:101px;top:10px;width:11px;height:20px;background:#1c1816"></div>
 <div class="o" style="left:105px;top:12px;width:3px;height:3px;background:#d8d8d8"></div>
 <div class="o" style="left:113px;top:18px;width:5px;height:9px;background:#e8b898"></div>
 <div class="o" style="left:112px;top:11px;width:8px;height:6px;background:#221c1a"></div>
 <div class="o" style="left:122px;top:10px;width:6px;height:22px;background:#1a1616"></div>
 <div class="o" style="left:69px;top:35px;width:3px;height:11px;background:#1a1414;transform:rotate(35deg)"></div>
 <div class="o" style="left:75px;top:30px;width:13px;height:22px;border-radius:2px;background:#55504a"></div>
 <div class="o" style="left:89px;top:30px;width:11px;height:13px;background:#1c1e1e"></div>
 <div class="o" style="left:90px;top:43px;width:10px;height:6px;background:#d88a68"></div>
 <div class="o" style="left:104px;top:30px;width:26px;height:37px;border-radius:4px;background:#2a2b30"></div>
 <div class="o" style="left:108px;top:29px;width:18px;height:3px;border-radius:2px;background:#3a3a40"></div>
 <div class="o" style="left:78px;top:52px;width:9px;height:14px;background:#1c1c1c"></div>
 <div class="o" style="left:90px;top:54px;width:7px;height:13px;background:#1c1c1e"></div>
 <div class="o" style="left:99px;top:55px;width:5px;height:11px;background:#1c1c1c"></div>
 </div>
 <div class="o" style="left:3px;top:4px;width:5px;height:2.5px;background:#eee"></div>
 <div class="o" style="left:128px;top:4px;width:4px;height:3px;background:#eee"></div>
 <div class="o" style="left:16px;top:7px;width:32px;height:32px;border-radius:50%;background:radial-gradient(circle,#2a2a2e 0 22%,#0a0a0c 26% 55%,#1c1c20 60%);box-shadow:0 2px 3px rgba(0,0,0,.4)"></div>
 <div class="o" style="left:21px;top:47px;width:13px;height:3px;background:#b8a4f4"></div>
 <div class="o" style="left:18px;top:46px;width:1.2px;height:21px;background:#d060a0"></div>
 <div class="tt" style="left:20px;top:52px;font-size:8.8px;letter-spacing:-.3px">Camera<br>Lens</div>
</div>
<!-- Assets -->
<svg style="left:16px;top:653px" width="8" height="10"><path d="M0 0 L6 4.5 L0 9 Z" fill="#e0e0e0"/></svg>
<div class="t" style="left:31px;top:650px;font-size:13px;color:#e6e6e6">Assets (4)</div>
<svg style="left:14px;top:686px" width="10" height="10"><path d="M9 0 V9 H0 Z" fill="#e0e0e0"/></svg>
<div class="t" style="left:31px;top:683px;font-size:13.5px;color:#e6e6e6">Tutorial</div>
<div class="sn" style="left:13px;top:709px">9</div>
<div class="a" style="left:37px;top:708px;width:141px;height:83px;border-radius:7px;border:3px solid #f2cbb8"></div>
<div class="a" style="left:40px;top:711px;width:135px;height:77px;border-radius:3px;background:linear-gradient(180deg,#5a2bf2,#4412e2)"></div>
<div class="a" style="left:43px;top:714px;width:5px;height:2px;background:#eee"></div>
<div class="a" style="left:168px;top:714px;width:4px;height:3px;background:#eee"></div>
<div class="a" style="left:43px;top:783px;width:2px;height:2px;background:#ccc"></div>
<div class="a" style="left:167px;top:783px;width:4px;height:1px;background:#aaa"></div>
<!-- ============ MAIN AREA ============ -->
<div class="a" style="left:200px;top:200px;width:1355px;height:852px;background:#0c0c0c"></div>
<div class="a" style="left:1554px;top:200px;width:1px;height:852px;background:#2c2c2c"></div>
<div class="a" style="left:200px;top:1051px;width:1355px;height:1px;background:#2c2c2c"></div>
<!-- slide -->
<div class="a" style="left:215px;top:246px;width:1312px;height:739px;background:linear-gradient(180deg,#5e2cf4 0%,#5c2af2 30%,#4c18e8 70%,#3f0ddf 100%);border:1px solid #8a78c0;overflow:hidden">
 <div class="a" style="left:-30px;top:-40px;width:170px;height:170px;border-radius:50%;background:radial-gradient(closest-side,rgba(180,155,255,.7),rgba(160,125,255,.4) 40%,rgba(130,90,255,.12) 75%,rgba(120,80,255,0) 100%)"></div>
</div>
<!-- logo -->
<svg style="left:0;top:0" width="320" height="320">
 <path fill-rule="evenodd" fill="#fbf8ff" d="M253 274 a8.8 8 0 1 0 0.01 0 Z M253 278.6 a3.1 3.5 0 1 1 -0.01 0 Z"/>
 <path fill="#fbf8ff" d="M261 290 L261 274 L267.6 274 L272.8 282.5 L272.8 274 L295.6 274 L294.6 278.7 L278.3 278.7 L278.3 279.7 L292.6 279.7 L291.8 284.2 L278.3 284.2 L278.3 285.2 L291.4 285.2 L290.6 290 L272.5 290 L266.8 281.5 L266.8 290 Z"/>
 <text x="247" y="301.3" font-family="Liberation Sans" font-weight="bold" font-style="italic" font-size="14.2" letter-spacing="1.1" fill="#fbf8ff" stroke="#fbf8ff" stroke-width="1.1" stroke-linejoin="round">SKILL</text>
</svg>
<!-- hamburger -->
<div class="a" style="left:1471px;top:275px;width:29px;height:4px;border-radius:2px;background:#fff"></div>
<div class="a" style="left:1471px;top:283.5px;width:29px;height:4px;border-radius:2px;background:#fff"></div>
<div class="a" style="left:1471px;top:292px;width:29px;height:4px;border-radius:2px;background:#fff"></div>
<!-- page number badge -->
<div class="a" style="left:246px;top:940px;width:20px;height:19px;border-radius:4px;background:#8a68f6;box-shadow:0 0 8px 3px rgba(140,110,250,.3)"></div>
<div class="t" style="left:252.5px;top:944px;font-size:12px;font-weight:bold;color:#fff">9</div>
<div class="t" style="left:1462px;top:943px;font-size:13.5px;color:#f0eaff;letter-spacing:1.4px">2023</div>

<div class="a" style="left:1533px;top:202px;width:21px;height:828px;background:#101010"></div>
<div class="a" style="left:204px;top:1030px;width:1350px;height:21px;border-radius:6px 0 0 6px;background:#111111"></div>
<!-- vertical scrollbar -->
<svg style="left:1536px;top:204px" width="16" height="830">
 <path d="M3 10 L8 3.5 L13 10 Z" fill="#8f8f8f"/>
 <rect x="3.5" y="684" width="9.5" height="84" rx="4.75" fill="#8f8f8f"/>
 <path d="M3 774 L13 774 L8 781 Z" fill="#8f8f8f"/>
 <path d="M3 797 L8 790 L13 797 Z M3 803.5 L8 796.5 L13 803.5 Z" fill="#8f8f8f"/>
 <path d="M3 809 L13 809 L8 816 Z M3 815.5 L13 815.5 L8 822.5 Z" fill="#8f8f8f"/>
</svg>
<!-- horizontal scrollbar -->
<svg style="left:200px;top:1030px" width="1340" height="20">
 <path d="M7.5 10 L15.5 4.5 L15.5 15.5 Z" fill="#8f8f8f"/>
 <rect x="48" y="5.3" width="1267" height="9.5" rx="4.75" fill="#8f8f8f"/>
 <path d="M1329 10 L1321 4.5 L1321 15.5 Z" fill="#8f8f8f"/>
</svg>
<!-- ============ FORMAT PANE ============ -->
<div class="a" style="left:1555px;top:200px;width:319px;height:855px;background:#0c0c0c"></div>
<div class="a" style="left:1874px;top:200px;width:46px;height:855px;background:#101010"></div>
<div class="t" style="left:1567px;top:216px;font-size:22.8px;color:#e2e2e2">Format Background</div>
<svg style="left:1806px;top:224px" width="18" height="10" fill="none"><path d="M1 1 L8 8 L15 1" stroke="#e4e4e4" stroke-width="1.5"/></svg>
<svg style="left:1845px;top:223px" width="13" height="13" fill="none"><path d="M1 1 L12 12 M12 1 L1 12" stroke="#e4e4e4" stroke-width="1.5"/></svg>
<!-- right strip icons -->
<svg style="left:1886px;top:212px" width="24" height="22" fill="none">
 <rect x="8" y="1.5" width="12" height="11" fill="#e8932e"/>
 <path d="M2 9.5 h9 v9 h-9 z" stroke="#cfcfcf" stroke-width="1.3"/>
 <path d="M13 5 v13 l3 -3 l2 4 l2 -1 l-2 -4 h4 z" fill="#101010" stroke="#d6d6d6" stroke-width="1.2" stroke-linejoin="round"/>
</svg>
<div class="a" style="left:1875px;top:245px;width:44px;height:45px;border-radius:6px;background:#1c1c1c;border:1px solid #4a4a4a"></div>
<svg style="left:1886px;top:255px" width="24" height="24" fill="none" stroke-linejoin="round" stroke-linecap="round">
 <path d="M2 9 l6 -5 l5 6 l-5 5 z" stroke="#d6d6d6" stroke-width="1.3"/>
 <path d="M8 4 q1 -3 3 -1 M12 5 q3 -1 2 4" stroke="#d6d6d6" stroke-width="1.1"/>
 <path d="M21 8.5 q1 -1 .5 1 L13 19 l-1.5 -1.5 Z" stroke="#d6d6d6" stroke-width="1.1"/>
 <path d="M11.5 17.5 q-3 0 -4.5 2.5 q-1 1.5 -3 2 q5.5 1.5 9 -2 z" fill="#3d8ae0" stroke="#3d8ae0" stroke-width="1"/>
</svg>
<!-- fill tab icon -->
<div class="a" style="left:1569px;top:250px;width:35px;height:35px;border-radius:5px;background:#121212;border:1.5px solid #5a5a5a"></div>
<svg style="left:1565px;top:245px" width="45" height="45" fill="none">
 <path d="M24 15 Q33 17 32.5 26 Q32 31 30 33.5 Q29.5 27 26.5 23 Z" fill="#f4f4f4"/>
 <path d="M9.2 23.5 L20.2 12.5 L30 22.7 L19.4 33.75 Z" fill="#c43a20" stroke="#f2e4de" stroke-width="1.3" stroke-linejoin="round"/>
 <path d="M15.5 17.5 Q14 9.5 18.5 10 Q21 10.5 20.5 13" stroke="#e0e0e0" stroke-width="1.1"/>
 <circle cx="20" cy="19.5" r="1.7" fill="#f8d8c0"/>
</svg>
<!-- tab underline with notch -->
<svg style="left:1566px;top:290px" width="300" height="14" fill="none">
 <path d="M1 11 H10 L17 3 L24 11 H296" stroke="#555" stroke-width="1.3"/>
</svg>
<!-- Fill header -->
<svg style="left:1574px;top:316px" width="12" height="8" fill="none"><path d="M1 1 L5.5 6 L10 1" stroke="#eaeaea" stroke-width="1.6"/></svg>
<div class="t" style="left:1592px;top:313px;font-size:14.5px;font-weight:bold;color:#f4f4f4">Fill</div>
<!-- radios -->
<svg style="left:1588px;top:345px" width="20" height="130" fill="none">
 <circle cx="9.7" cy="9.3" r="6" fill="#1a1a1a" stroke="#5a5a5a" stroke-width="1.2"/>
 <circle cx="9.7" cy="36.5" r="6" fill="#0c0c0c" stroke="#e07a48" stroke-width="3"/>
 <circle cx="9.7" cy="63.2" r="6" fill="#1a1a1a" stroke="#5a5a5a" stroke-width="1.2"/>
 <circle cx="9.7" cy="90.4" r="6" fill="#1a1a1a" stroke="#5a5a5a" stroke-width="1.2"/>
 <rect x="3.5" y="111.5" width="13.5" height="13.5" rx="2" fill="#141414" stroke="#5a5a5a" stroke-width="1.2"/>
</svg>
<div class="t pn" style="left:1612px;top:348px;font-size:13.6px">Solid fill</div>
<div class="t pn" style="left:1612px;top:375px;font-size:13.6px">Gradient fill</div>
<div class="t pn" style="left:1612px;top:402px;font-size:13.6px">Picture or texture fill</div>
<div class="t pn" style="left:1612px;top:429px;font-size:13.6px">Pattern fill</div>
<div class="t pn" style="left:1612px;top:456px;font-size:13.3px">Hide background graphics</div>
<svg style="left:1610px;top:362px" width="20" height="110"><g fill="#dcdcdc"><rect x="1.5" y="0" width="8" height="1"/><rect x="1.5" y="27" width="9" height="1"/><rect x="1.5" y="54" width="8" height="1"/><rect x="13" y="81" width="8" height="1"/><rect x="1.5" y="108" width="9" height="1"/></g></svg>
<!-- separator -->
<div class="a" style="left:1591px;top:483px;width:250px;height:1px;background:#2e2e2e"></div>
<!-- gradient options -->
<div class="t" style="left:1602px;top:501px;font-size:13.2px;color:#ececec">Preset gradients</div>
<div class="a" style="left:1790px;top:491px;width:50px;height:31px;border-radius:5px;background:#151515;border:1px solid #3a3a3a"></div>
<div class="a" style="left:1800px;top:497px;width:19px;height:19px;border:1.5px solid #bdbdbd;background:linear-gradient(135deg,#2a2a2a 0 45%,#9a9a9a 55%,#d0d0d0 100%)"></div>
<svg style="left:1826px;top:503px" width="10" height="7" fill="none"><path d="M1 1 L4.5 4.5 L8 1" stroke="#e0e0e0" stroke-width="1.4"/></svg>

<div class="t" style="left:1602px;top:536px;font-size:13px;color:#ececec">Type</div>
<div class="a" style="left:1715px;top:529px;width:125px;height:25px;border-radius:5px;background:#151515;border:1px solid #3a3a3a"></div>
<div class="t" style="left:1721px;top:535px;font-size:13px;color:#ececec">Linear</div>
<svg style="left:1826px;top:538px" width="10" height="7" fill="none"><path d="M1 1 L4.5 4.5 L8 1" stroke="#e0e0e0" stroke-width="1.4"/></svg>

<div class="t" style="left:1602px;top:570px;font-size:13px;color:#ececec">Direction</div>
<div class="a" style="left:1790px;top:560px;width:50px;height:31px;border-radius:5px;background:#151515;border:1px solid #3a3a3a"></div>
<div class="a" style="left:1800px;top:566px;width:19px;height:19px;border:1.5px solid #bdbdbd;background:linear-gradient(135deg,#2a2a2a 0 45%,#9a9a9a 55%,#d0d0d0 100%)"></div>
<svg style="left:1826px;top:572px" width="10" height="7" fill="none"><path d="M1 1 L4.5 4.5 L8 1" stroke="#e0e0e0" stroke-width="1.4"/></svg>

<div class="t" style="left:1602px;top:604px;font-size:13px;color:#ececec">Angle</div>
<div class="a" style="left:1759px;top:598px;width:81px;height:23px;border-radius:5px;background:#151515;border:1px solid #3a3a3a"></div>
<div class="t" style="left:1766px;top:604px;font-size:12px;color:#e0e0e0">90°</div>
<svg style="left:1825px;top:601px" width="10" height="18" fill="none"><path d="M1.5 4 L4.5 1.5 L7.5 4 M1.5 12.5 L4.5 15 L7.5 12.5" stroke="#8a8a8a" stroke-width="1"/></svg>

<div class="t" style="left:1602px;top:631px;font-size:13.2px;color:#ececec">Gradient stops</div>
<!-- gradient bar -->
<div class="a" style="left:1614px;top:657px;width:146px;height:19px;border:1.5px solid #e8d8f4;background:linear-gradient(90deg,#4a20e6,#5a28f2 50%,#3c10dc)"></div>
<div class="a" style="left:1614px;top:656px;width:17px;height:21px;border:1.5px solid #e9a080;background:#4a1ee6"></div>
<svg style="left:1614px;top:675px" width="18" height="11"><path d="M1 1 H16 L8.5 9 Z" fill="#fff" stroke="#e9a080" stroke-width="1.2"/></svg>
<div class="a" style="left:1746px;top:656px;width:14px;height:21px;border:1.5px solid #e8e0f4;background:#3c12dc"></div>
<svg style="left:1745px;top:675px" width="16" height="11"><path d="M1 1 H15 L8 9 Z" fill="#fff"/></svg>
<div class="a" style="left:1772px;top:655px;width:29px;height:29px;border-radius:5px;background:#151515;border:1px solid #3a3a3a"></div>
<svg style="left:1778px;top:660px" width="18" height="19" fill="none">
 <path d="M6 4 h7 v10 l-3.5 3 l-3.5 -3 z" stroke="#c8c8c8" stroke-width="1.2"/>
 <rect x="4" y="6" width="6" height="8" fill="#4a4a4a"/>
 <path d="M4 1 v6 M1 4 h6" stroke="#5ec46a" stroke-width="1.4"/>
</svg>
<div class="a" style="left:1811px;top:655px;width:29px;height:29px;border-radius:5px;background:#151515;border:1px solid #3a3a3a"></div>
<svg style="left:1817px;top:660px" width="18" height="19" fill="none">
 <path d="M6 4 h7 v10 l-3.5 3 l-3.5 -3 z" stroke="#c8c8c8" stroke-width="1.2"/>
 <rect x="4" y="6" width="6" height="8" fill="#4a4a4a"/>
 <path d="M1.5 1.5 l5 5 M6.5 1.5 l-5 5" stroke="#e04848" stroke-width="1.4"/>
</svg>

<div class="t" style="left:1613px;top:703px;font-size:13px;color:#ececec">Color</div>
<div class="a" style="left:1790px;top:693px;width:50px;height:30px;border-radius:5px;background:#151515;border:1px solid #3a3a3a"></div>
<svg style="left:1800px;top:697px" width="22" height="22" fill="none">
 <path d="M4 10 L9 4 L15 9 L11 14 H6 Z" stroke="#e0e0e0" stroke-width="1.3" stroke-linejoin="round"/>
 <path d="M9 4 Q8 1 6 3" stroke="#e0e0e0" stroke-width="1.1"/>
 <path d="M14 6 q2 -2 4 1 M17 4.5 v3 h-3" stroke="#5aa0a0" stroke-width="1.1"/>
 <rect x="1.5" y="15.5" width="18" height="4.5" rx="1" fill="#4a1cf0"/>
</svg>
<svg style="left:1826px;top:706px" width="10" height="7" fill="none"><path d="M1 1 L4.5 4.5 L8 1" stroke="#e0e0e0" stroke-width="1.4"/></svg>

<div class="t" style="left:1613px;top:737px;font-size:13px;color:#ececec">Position</div>
<div class="t" style="left:1613px;top:766px;font-size:13px;color:#ececec">Transparency</div>
<div class="a" style="left:1702px;top:766px;width:3px;height:10px;background:#bdbdbd"></div>
<div class="a" style="left:1703px;top:771px;width:20px;height:1.5px;background:#6a6a6a"></div>
<div class="t" style="left:1613px;top:796px;font-size:13px;color:#ececec">Brightness</div>
<div class="a" style="left:1703px;top:801px;width:20px;height:1.5px;background:#6a6a6a"></div>
<div class="a" style="left:1602px;top:822px;width:14px;height:14px;border-radius:2px;border:1px solid #3a3a3a"></div>
<svg style="left:1604px;top:825px" width="10" height="9" fill="none"><path d="M1.5 4.5 L4 7 L9 1.5" stroke="#4a4a4a" stroke-width="1.2"/></svg>
<div class="t" style="left:1623px;top:823px;font-size:13px;color:#555">Rotate with shap</div>

<div class="a" style="left:1610.8px;top:513.5px;width:4.4px;height:1px;background:#d8d8d8"></div>
<div class="a" style="left:1609.5px;top:549px;width:6px;height:1px;background:#d8d8d8"></div>
<div class="a" style="left:1602px;top:583px;width:9px;height:1px;background:#d8d8d8"></div>
<div class="a" style="left:1628.3px;top:617px;width:7px;height:1px;background:#d8d8d8"></div>
<div class="a" style="left:1613px;top:716px;width:9px;height:1px;background:#d8d8d8"></div>
<div class="a" style="left:1621.8px;top:750px;width:7px;height:1px;background:#d8d8d8"></div>
<div class="a" style="left:1613px;top:779px;width:7.5px;height:1px;background:#d8d8d8"></div>
<div class="a" style="left:1626px;top:809px;width:3px;height:1px;background:#d8d8d8"></div>
<div class="a" style="left:1665px;top:836px;width:9px;height:1px;background:#505050"></div>
<div class="a" style="left:1717.7px;top:1030px;width:7px;height:1px;background:#d8d8d8"></div>
<!-- bottom buttons -->
<div class="a" style="left:1567px;top:1010px;width:88px;height:27px;border-radius:5px;background:#151515;border:1px solid #3a3a3a"></div>
<div class="t" style="left:1576px;top:1017px;font-size:13.8px;color:#ececec">Apply to All</div>
<div class="a" style="left:1666px;top:1010px;width:80px;height:27px;border-radius:5px;background:#151515;border:1px solid #3a3a3a"></div>
<div class="t" style="left:1675px;top:1017px;font-size:13px;color:#ececec;letter-spacing:-0.5px">Reset Ba</div>
<!-- ============ COLOR POPUP ============ -->
<div class="a" style="left:1721px;top:724px;width:195px;height:329px;border-radius:6px;background:#232323;border:1px solid #3a3a3a;box-shadow:0 2px 8px rgba(0,0,0,.6)"></div>
<div class="t" style="left:1735px;top:735px;font-size:13px;font-weight:bold;color:#f4f4f4">Theme Colors</div>
<style>.sw{position:absolute;width:14px;height:14px}</style>
<div id="theme"></div>
<div class="sw" style="left:1724px;top:760px;background:#ffffff"></div>
<div class="sw" style="left:1743.5px;top:760px;background:#000000"></div>
<div class="sw" style="left:1763px;top:760px;background:#e7e6e6"></div>
<div class="sw" style="left:1782.5px;top:760px;background:#44546a"></div>
<div class="sw" style="left:1802px;top:760px;background:#e8454f"></div>
<div class="sw" style="left:1821.5px;top:760px;background:#f27b35"></div>
<div class="sw" style="left:1841px;top:760px;background:#f7b630"></div>
<div class="sw" style="left:1860.5px;top:760px;background:#72b82a"></div>
<div class="sw" style="left:1880px;top:760px;background:#1d7ccc"></div>
<div class="sw" style="left:1899.5px;top:760px;background:#4a1490"></div>
<!-- shade columns -->
<div class="a" style="left:1724px;top:790px;width:14px;height:73px;background:linear-gradient(180deg,#f2f2f2 0 20%,#d9d9d9 20% 40%,#bfbfbf 40% 60%,#a6a6a6 60% 80%,#808080 80%)"></div>
<div class="a" style="left:1743.5px;top:790px;width:14px;height:73px;background:linear-gradient(180deg,#7f7f7f 0 20%,#595959 20% 40%,#404040 40% 60%,#262626 60% 80%,#0d0d0d 80%)"></div>
<div class="a" style="left:1763px;top:790px;width:14px;height:73px;background:linear-gradient(180deg,#d0cece 0 20%,#aeabab 20% 40%,#757171 40% 60%,#3b3838 60% 80%,#161616 80%)"></div>
<div class="a" style="left:1782.5px;top:790px;width:14px;height:73px;background:linear-gradient(180deg,#d6dce5 0 20%,#adb9ca 20% 40%,#8497b0 40% 60%,#333f50 60% 80%,#222a35 80%)"></div>
<div class="a" style="left:1802px;top:790px;width:14px;height:73px;background:linear-gradient(180deg,#fad4d6 0 20%,#f6a8ad 20% 40%,#f17c84 40% 60%,#f00014 60% 80%,#b00010 80%)"></div>
<div class="a" style="left:1821.5px;top:790px;width:14px;height:73px;background:linear-gradient(180deg,#fde4d6 0 20%,#facaad 20% 40%,#f8af85 40% 60%,#f25a08 60% 80%,#a84010 80%)"></div>
<div class="a" style="left:1841px;top:790px;width:14px;height:73px;background:linear-gradient(180deg,#fdf0d5 0 20%,#fce2ac 20% 40%,#fad382 40% 60%,#e8a310 60% 80%,#a0780e 80%)"></div>
<div class="a" style="left:1860.5px;top:790px;width:14px;height:73px;background:linear-gradient(180deg,#e3f2d4 0 20%,#c7e5a9 20% 40%,#aad87f 40% 60%,#5a9a1c 60% 80%,#3c6a14 80%)"></div>
<div class="a" style="left:1880px;top:790px;width:14px;height:73px;background:linear-gradient(180deg,#cde4f8 0 20%,#9ccaf1 20% 40%,#6aafea 40% 60%,#165c99 60% 80%,#0e3d66 80%)"></div>
<div class="a" style="left:1899.5px;top:790px;width:14px;height:73px;background:linear-gradient(180deg,#d9b8f4 0 20%,#b27de8 20% 40%,#8c3ede 40% 60%,#34107a 60% 80%,#220a50 80%)"></div>
<div class="a" style="left:1722px;top:877px;width:193px;height:1px;background:#383838"></div>
<div class="t" style="left:1735px;top:889px;font-size:13px;font-weight:bold;color:#f4f4f4">Standard Colors</div>
<div class="sw" style="left:1724px;top:914px;background:#c00000"></div>
<div class="sw" style="left:1743.5px;top:914px;background:#ff0000"></div>
<div class="sw" style="left:1763px;top:914px;background:#ffc000"></div>
<div class="sw" style="left:1782.5px;top:914px;background:#ffff00"></div>
<div class="sw" style="left:1802px;top:914px;background:#92d050"></div>
<div class="sw" style="left:1821.5px;top:914px;background:#00b050"></div>
<div class="sw" style="left:1841px;top:914px;background:#00b0f0"></div>
<div class="sw" style="left:1860.5px;top:914px;background:#0070c0"></div>
<div class="sw" style="left:1880px;top:914px;background:#002060"></div>
<div class="sw" style="left:1899.5px;top:914px;background:#7030a0"></div>
<div class="a" style="left:1722px;top:940px;width:193px;height:1px;background:#383838"></div>
<div class="t" style="left:1735px;top:953px;font-size:13px;font-weight:bold;color:#f4f4f4">Recent Colors</div>
<div class="sw" style="left:1724px;top:978px;background:#3c10ee"></div>
<div class="sw" style="left:1743.5px;top:978px;background:#1c0a8e"></div>
<div class="sw" style="left:1763px;top:978px;background:#3c16d8"></div>
<div class="sw" style="left:1782.5px;top:978px;background:#f07010"></div>
<div class="sw" style="left:1802px;top:978px;background:#2c0e9c"></div>
<div class="sw" style="left:1821.5px;top:978px;background:#3812b8"></div>
<div class="sw" style="left:1841px;top:978px;background:#4612c8"></div>
<div class="a" style="left:1722px;top:1004px;width:193px;height:1px;background:#383838"></div>
<!-- more colors highlighted -->
<div class="a" style="left:1722px;top:1006px;width:193px;height:24px;background:#2e2e2e;border-top:1px solid #444;border-bottom:1px solid #444"></div>
<svg style="left:1723px;top:1008px" width="20" height="20" fill="none">
 <path d="M9 2 a8 8 0 1 0 2 15 q2 -1 0 -3 q-1.5 -2 1 -3 h3 a3.5 3.5 0 0 0 3 -4 a8 8 0 0 0 -9 -5 z" stroke="#d0d0d0" stroke-width="1.2"/>
 <circle cx="6" cy="8" r="1.3" fill="#6aa0e0"/><circle cx="10" cy="5.5" r="1.3" fill="#e0a040"/><circle cx="14" cy="7.5" r="1.3" fill="#e06060"/><circle cx="5" cy="12" r="1.3" fill="#60c080"/>
</svg>
<div class="t" style="left:1747px;top:1012px;font-size:13px;color:#ececec">More Colors...</div>
<div class="a" style="left:1748px;top:1025px;width:11px;height:1px;background:#ececec"></div>
<svg style="left:1723px;top:1034px" width="20" height="18" fill="none">
 <path d="M2 16 l1 -4 l9 -9 l3 3 l-9 9 z M12 2 l2 -1 l3 3 l-1 2" stroke="#d0d0d0" stroke-width="1.2" stroke-linejoin="round"/>
</svg>
<div class="t" style="left:1747px;top:1037px;font-size:13px;color:#ececec">Eyedropper</div>
<!-- mouse cursor -->
<svg style="left:1786px;top:1017px" width="14" height="20"><path d="M1 1 V15 L4.5 11.5 L7 17 L9.5 16 L7 10.5 H12 Z" fill="#fff" stroke="#000" stroke-width="1"/></svg>

<!-- ============ STATUS BAR ============ -->
<div class="a" style="left:0;top:1053px;width:1920px;height:27px;background:#141414"></div>
<div class="t" style="left:8px;top:1061px;font-size:11.6px;color:#dedede">Slide 9 of 9</div>
<svg style="left:1439px;top:1058px" width="20" height="19" fill="none" stroke="#e0e0e0" stroke-width="1.4"><path d="M6 5 l3.5 -3.5 l3.5 3.5 M1 9 h18 M1 13 h18 M1 17 h18"/></svg>
<div class="t" style="left:1460px;top:1062px;font-size:12px;color:#e4e4e4">Notes</div>
<div class="a" style="left:1511px;top:1055px;width:45px;height:25px;background:#242424"></div>
<svg style="left:1525px;top:1060px" width="18" height="15" fill="none" stroke="#e0e0e0" stroke-width="1.3"><rect x="1" y="1" width="16" height="13"/><path d="M4 1 v13 M7 4 h7 v4 h-7 z"/></svg>
<svg style="left:1570px;top:1060px" width="18" height="15" fill="none" stroke="#e0e0e0" stroke-width="1.3"><rect x="1" y="1" width="6.5" height="5" rx="1"/><rect x="10" y="1" width="6.5" height="5" rx="1"/><rect x="1" y="9" width="6.5" height="5" rx="1"/><rect x="10" y="9" width="6.5" height="5" rx="1"/></svg>
<svg style="left:1615px;top:1059px" width="18" height="16" fill="none" stroke="#e0e0e0" stroke-width="1.2" stroke-linejoin="round"><path d="M9 3 q-3 -2 -8 -1.5 v12 q5 -.5 8 1.5 q3 -2 8 -1.5 v-12 q-5 -.5 -8 1.5 z M9 3 v12 M3.5 5 v6.5 M6 5.5 v6.5 M12 5.5 v6.5 M14.5 5 v6.5"/></svg>
<svg style="left:1660px;top:1059px" width="18" height="17" fill="none" stroke="#e0e0e0" stroke-width="1.3"><path d="M1 1 h15 M2 1 v9 h13 v-9 M8.5 10 v6 M5 16 h7 M5 5 h6 v3 h-6 z"/></svg>
<div class="a" style="left:1697px;top:1066px;width:9px;height:1.3px;background:#bdbdbd"></div>
<div class="a" style="left:1711px;top:1066.5px;width:112px;height:1px;background:#9a9a9a"></div>
<div class="a" style="left:1759px;top:1061px;width:6.5px;height:12px;border-radius:1px;background:#b8b8b8"></div>
<div class="a" style="left:1767px;top:1063px;width:1px;height:8px;background:#9a9a9a"></div>
<svg style="left:1829px;top:1062px" width="10" height="10" fill="none" stroke="#cfcfcf" stroke-width="1.3"><path d="M5 0 v10 M0 5 h10"/></svg>
<div class="t" style="left:1852px;top:1061px;font-size:12px;color:#e0e0e0">91 %</div>
<svg style="left:1898px;top:1058px" width="18" height="18" fill="none" stroke="#e0e0e0" stroke-width="1.3"><rect x="5" y="5" width="8" height="8"/><path d="M7 3 l2 -2 l2 2 M7 15 l2 2 l2 -2 M3 7 l-2 2 l2 2 M15 7 l2 2 l-2 2"/></svg>
</body></html>
